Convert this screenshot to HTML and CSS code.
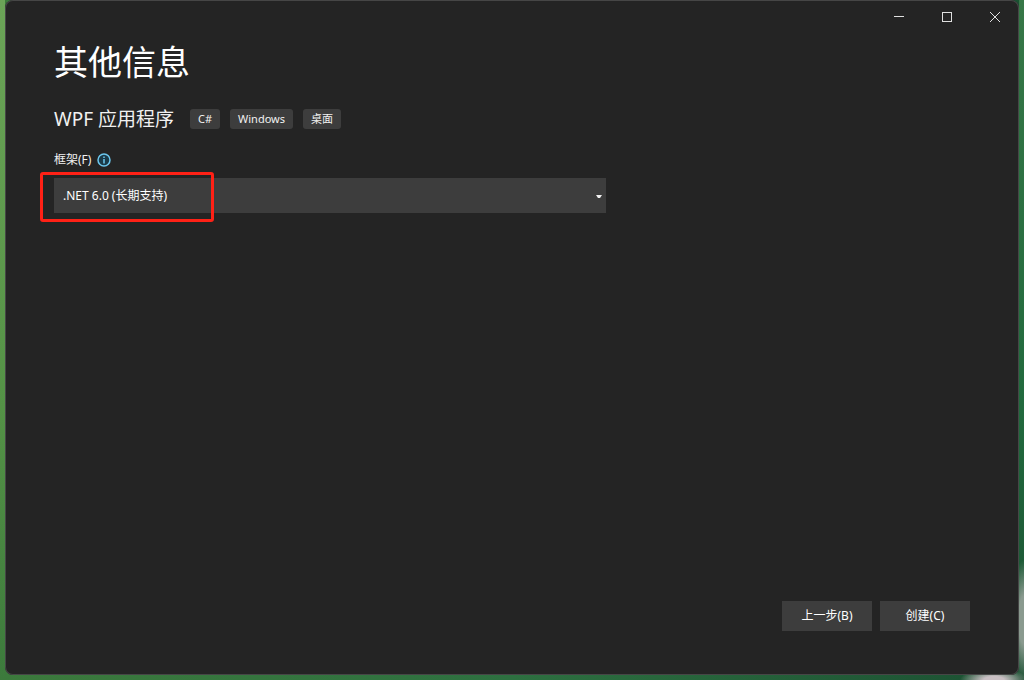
FILE: index.html
```html
<!DOCTYPE html>
<html lang="zh-CN">
  <head>
    <meta charset="UTF-8" />
    <meta name="viewport" content="width=device-width, initial-scale=1.0" />
    <title>其他信息</title>
    <link rel="stylesheet" href="styles.css">
  </head>
  <body>
    <div class="window">
      <header class="titlebar">
        <button type="button" aria-label="最小化">
          <svg width="10" height="10" viewBox="0 0 10 10" shape-rendering="crispEdges"><path d="M0 4.5H10" /></svg>
        </button>
        <button type="button" aria-label="最大化">
          <svg width="10" height="10" viewBox="0 0 10 10" shape-rendering="crispEdges"><path d="M.5 .5H9.5V9.5H.5Z" /></svg>
        </button>
        <button type="button" aria-label="关闭">
          <svg width="10" height="10" viewBox="0 0 10 10"><path d="M0 0L10 10M10 0L0 10" /></svg>
        </button>
      </header>
      <main>
        <h1>其他信息</h1>
        <div class="project">
          <h2>WPF 应用程序</h2>
          <ul class="tags">
            <li>C#</li>
            <li>Windows</li>
            <li>桌面</li>
          </ul>
        </div>
        <div class="field-label">
          <label for="framework">框架(F)</label>
          <svg class="info" width="14" height="14" viewBox="0 0 14 14">
            <circle cx="7" cy="7" r="6" />
            <path d="M7 6V10.5M7 3.5V5" />
          </svg>
        </div>
        <div class="select">
          <select id="framework">
            <option>.NET 6.0 (长期支持)</option>
          </select>
          <svg class="arrow" width="6" height="3" viewBox="0 0 6 3"><path d="M0 0H6L4 3H2Z" /></svg>
          <div class="highlight"></div>
        </div>
      </main>
      <footer>
        <button type="button">上一步(B)</button>
        <button type="button">创建(C)</button>
      </footer>
    </div>
  </body>
</html>
```

FILE: styles.css
```css
* { box-sizing: border-box; }
body {
  display: flex;
  min-height: 100vh;
  margin: 0;
  padding: 0 5px 5px;
  background:
    radial-gradient(ellipse 34px 12px at calc(100% - 30px) 100%, #c9bfc3 30%, transparent) no-repeat,
    radial-gradient(ellipse 14px 60px at 100% calc(100% - 60px), #8a9a8f 40%, transparent) no-repeat,
    linear-gradient(#6ba457, #549246 60%, #3c7a3c) left / 5px 100% no-repeat,
    linear-gradient(#377747, #226a3e 60%, #1b5032) right / 5px 100% no-repeat,
    linear-gradient(90deg, #3c7a3c, #2d7040 50%, #1b5032);
  color: #f1f1f1;
  font: 12px/16px "Noto Sans", "Noto Sans CJK SC", sans-serif;
}
button, select { border: 0; background: #3d3d3d; color: #fff; font: inherit; }
ul { margin: 0; padding: 0; list-style: none; }
.window { display: flex; flex-direction: column; flex: 1; border-radius: 8px; background: #242424; box-shadow: inset 0 0 0 1px #464646; }
.titlebar { display: flex; justify-content: flex-end; }
.titlebar button { display: flex; align-items: center; justify-content: center; width: 48px; height: 34px; padding: 0; background: none; }
.titlebar path { fill: none; stroke: #e0e0e0; }
main { flex: 1; padding: 4px 49px 0; }
h1 { margin: 0; color: #fff; font-size: 34px; font-weight: 400; line-height: 48px; }
.project { display: flex; align-items: center; gap: 16px; margin-top: 19px; }
h2 { margin: 0; font-size: 19px; font-weight: 400; line-height: 28px; }
.tags { display: flex; gap: 10px; }
.tags li { padding: 2px 8px; border-radius: 3px; background: #3d3d3d; font-size: 11px; }
.field-label { display: flex; align-items: center; gap: 6px; margin-top: 19px; }
.info circle { fill: #1b3a48; stroke: #6cc7ee; stroke-width: 1.5; }
.info path { stroke: #6cc7ee; stroke-width: 1.5; }
.select { position: relative; max-width: 552px; margin-top: 10px; }
select { display: block; width: 100%; height: 35px; padding: 0 9px; border-radius: 0; appearance: none; }
.arrow { position: absolute; top: 17px; right: 4px; fill: #f1f1f1; pointer-events: none; }
.highlight { position: absolute; top: -6px; left: -14px; width: 174px; height: 50px; border: 3px solid #ff2116; border-radius: 3px; pointer-events: none; }
footer { display: flex; justify-content: flex-end; gap: 8px; padding: 0 49px 44px; }
footer button { width: 90px; height: 30px; padding: 0; }
```
